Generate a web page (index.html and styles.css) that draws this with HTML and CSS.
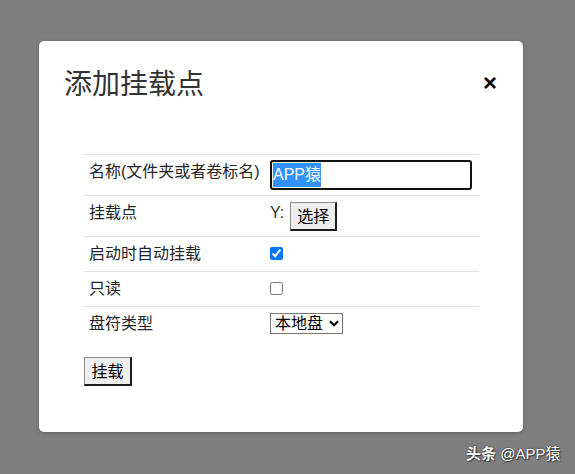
FILE: index.html
```html
<!DOCTYPE html>
<html lang="zh">
<head>
<meta charset="utf-8">
<title>添加挂载点</title>
<link rel="stylesheet" href="styles.css">
</head>
<body>
<div class="dialog">
  <div class="dialog-header">
    <h2 class="title">添加挂载点</h2>
    <span class="close">×</span>
  </div>
  <table class="form-table">
    <tr>
      <td class="label">名称(文件夹或者卷标名)</td>
      <td><div class="text-input"><span class="selected">APP猿</span></div></td>
    </tr>
    <tr>
      <td class="label">挂载点</td>
      <td><span class="drive">Y:</span><button class="btn">选择</button></td>
    </tr>
    <tr>
      <td class="label">启动时自动挂载</td>
      <td><input type="checkbox" class="check" checked></td>
    </tr>
    <tr>
      <td class="label">只读</td>
      <td><input type="checkbox" class="check"></td>
    </tr>
    <tr>
      <td class="label">盘符类型</td>
      <td>
        <div class="select">本地盘<svg class="chev" width="10" height="7" viewBox="0 0 10 7"><path d="M1 1.2 L5 5.2 L9 1.2" fill="none" stroke="#000" stroke-width="2.2"/></svg></div>
      </td>
    </tr>
  </table>
  <button class="btn btn-submit">挂载</button>
</div>
<div class="watermark"><span class="wm-brand">头条</span> @APP猿</div>
</body>
</html>
```
FILE: styles.css
```css
html, body {
  margin: 0;
  padding: 0;
}
body {
  background: #7f7f7f;
  font-family: "Liberation Sans", "Noto Sans CJK SC", sans-serif;
  color: #212529;
  width: 575px;
  height: 474px;
  overflow: hidden;
  position: relative;
}
.dialog {
  box-sizing: border-box;
  margin: 41px 0 0 39px;
  width: 484px;
  height: 391px;
  background: #fff;
  border-radius: 5px;
  box-shadow: 0 1px 4px rgba(0,0,0,0.25);
  padding: 21px 26px 0 25px;
}
.dialog-header {
  display: flex;
  justify-content: space-between;
  align-items: center;
  height: 40px;
}
.title {
  margin: 0;
  font-size: 28px;
  font-weight: normal;
  line-height: 40px;
  color: #333;
  font-family: "Noto Sans CJK SC", sans-serif;
}
.close {
  font-size: 24px;
  font-weight: bold;
  line-height: 24px;
  color: #000;
  padding-top: 2px;
}
.form-table {
  margin: 52px 0 0 20px;
  width: 395px;
  border-collapse: collapse;
  font-size: 16px;
  line-height: 24px;
}
.form-table td {
  border-top: 1px solid #dee2e6;
  padding: 5px;
  vertical-align: top;
}
.form-table td.label {
  width: 171px;
  color: #212529;
}
.text-input {
  box-sizing: border-box;
  width: 202px;
  height: 30px;
  border: 2px solid #111;
  border-radius: 3px;
  padding: 1px 1px;
  line-height: 24px;
  font-size: 16px;
}
.selected {
  background: #3390ff;
  color: #fff;
  display: inline-block;
  line-height: 24px;
}
.drive {
  color: #333;
  margin-right: 6px;
}
.btn {
  box-sizing: border-box;
  font-family: "Liberation Sans", "Noto Sans CJK SC", sans-serif;
  font-size: 16px;
  line-height: 22px;
  height: 29px;
  padding: 1px 6px 0;
  background: #efefef;
  color: #000;
  border-style: solid;
  border-width: 1px 2px 2px 1px;
  border-color: #8a8a8a #1c1c1c #1c1c1c #8a8a8a;
  border-radius: 0;
  vertical-align: top;
  margin-top: 1px;
}
.check {
  display: block;
  margin: 5px 0 0 0;
  width: 13px;
  height: 13px;
}
.select {
  display: inline-flex;
  align-items: center;
  box-sizing: border-box;
  height: 21px;
  margin-top: 1px;
  border: 1px solid #767676;
  padding: 0 3px 0 4px;
  background: #fff;
  line-height: 19px;
  color: #000;
  gap: 6px;
}
.chev {
  display: block;
}
.btn-submit {
  margin: 16px 0 0 20px;
  width: 48px;
  height: 29px;
}
.watermark {
  position: absolute;
  left: 466px;
  top: 442px;
  font-size: 15px;
  color: #fff;
  text-shadow: 0 0 2px rgba(0,0,0,0.7), 1px 1px 1px rgba(0,0,0,0.5);
}
.wm-brand {
  font-weight: bold;
}
```
